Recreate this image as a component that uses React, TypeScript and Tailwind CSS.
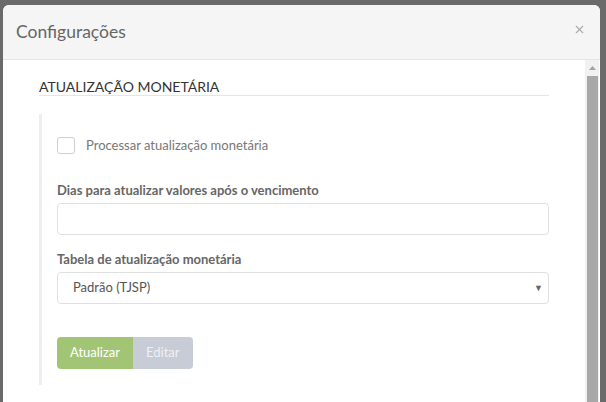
import { X } from 'lucide-react';

export default function App() {
  return (
    <div
      className="w-[606px] h-[402px] overflow-hidden bg-[#6a6a6a] pt-[5px] pl-[3px]"
      style={{ fontFamily: 'Lato, "Open Sans", sans-serif' }}
    >
      <div className="w-[597px] h-[397px] rounded-t-[6px] bg-white flex flex-col overflow-hidden">
        {/* Header */}
        <div className="h-[55px] shrink-0 bg-[#f5f5f5] border-b border-[#e5e5e5] flex items-center justify-between pl-[13px] pr-[14px]">
          <h2 className="text-[17.5px] text-[#666] leading-none">Configurações</h2>
          <X className="w-[13px] h-[13px] text-[#aaaaaa] -mt-[6px]" strokeWidth={2} />
        </div>

        {/* Body */}
        <div className="flex flex-1 min-h-0">
          <div className="flex-1 pl-[36px] pr-[36px] pt-[18px]">
            <div className="border-b border-[#e5e5e5] text-[14px] leading-[17px] text-[#333]">
              ATUALIZAÇÃO MONETÁRIA
            </div>

            <div className="mt-[18px] border-l-[3px] border-[#eeeeee] pl-[15px] pt-[22px] pb-[16px]">
              <label className="flex items-center gap-[11px]">
                <span className="w-[18px] h-[17px] rounded-[3px] border border-[#cfcfcf] bg-white" />
                <span className="text-[13px] text-[#777]">Processar atualização monetária</span>
              </label>

              <div className="mt-[25px] text-[13px] font-bold text-[#666] leading-[18px]">
                Dias para atualizar valores após o vencimento
              </div>
              <div className="mt-[4px] h-[32px] rounded-[4px] border border-[#e0e0e0] bg-white" />

              <div className="mt-[15px] text-[13px] font-bold text-[#666] leading-[18px]">
                Tabela de atualização monetária
              </div>
              <div className="mt-[4px] h-[32px] rounded-[4px] border border-[#e0e0e0] bg-white flex items-center justify-between pl-[15px] pr-[5px]">
                <span className="text-[13px] text-[#555]">Padrão (TJSP)</span>
                <span className="text-[9px] text-[#666]">▼</span>
              </div>

              <div className="mt-[33px] flex">
                <button className="h-[32px] px-[13px] rounded-l-[4px] bg-[#a2c575] text-white text-[13px]">
                  Atualizar
                </button>
                <button className="h-[32px] px-[13px] rounded-r-[4px] bg-[#c8ccd7] text-[#eef0f4] text-[13px]">
                  Editar
                </button>
              </div>
            </div>
          </div>

          {/* Scrollbar */}
          <div className="w-[14px] shrink-0 bg-[#f1f1f1] flex flex-col items-center mr-[1px]">
            <div className="h-[16px] flex items-center justify-center">
              <svg width="7" height="4" viewBox="0 0 7 4">
                <path d="M0 4 L3.5 0 L7 4 Z" fill="#a3a3a3" />
              </svg>
            </div>
            <div className="w-[11px] flex-1 bg-[#a8a8a8]" />
          </div>
        </div>
      </div>
    </div>
  );
}
